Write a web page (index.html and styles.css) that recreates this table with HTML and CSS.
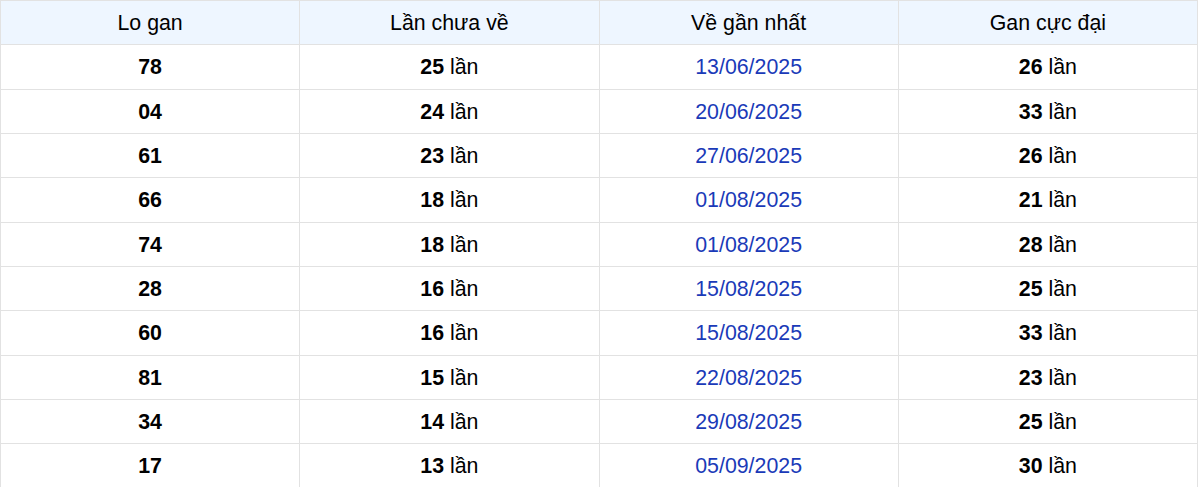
FILE: index.html
```html
<!DOCTYPE html>
<html lang="vi">
<head>
<meta charset="utf-8">
<title>Lo gan</title>
<link rel="stylesheet" href="styles.css">
</head>
<body>
<table class="gan-table">
  <thead>
    <tr><th>Lo gan</th><th>Lần chưa về</th><th>Về gần nhất</th><th>Gan cực đại</th></tr>
  </thead>
  <tbody>
    <tr><td><b>78</b></td><td><b>25</b> lần</td><td class="date">13/06/2025</td><td><b>26</b> lần</td></tr>
    <tr><td><b>04</b></td><td><b>24</b> lần</td><td class="date">20/06/2025</td><td><b>33</b> lần</td></tr>
    <tr><td><b>61</b></td><td><b>23</b> lần</td><td class="date">27/06/2025</td><td><b>26</b> lần</td></tr>
    <tr><td><b>66</b></td><td><b>18</b> lần</td><td class="date">01/08/2025</td><td><b>21</b> lần</td></tr>
    <tr><td><b>74</b></td><td><b>18</b> lần</td><td class="date">01/08/2025</td><td><b>28</b> lần</td></tr>
    <tr><td><b>28</b></td><td><b>16</b> lần</td><td class="date">15/08/2025</td><td><b>25</b> lần</td></tr>
    <tr><td><b>60</b></td><td><b>16</b> lần</td><td class="date">15/08/2025</td><td><b>33</b> lần</td></tr>
    <tr><td><b>81</b></td><td><b>15</b> lần</td><td class="date">22/08/2025</td><td><b>23</b> lần</td></tr>
    <tr><td><b>34</b></td><td><b>14</b> lần</td><td class="date">29/08/2025</td><td><b>25</b> lần</td></tr>
    <tr><td><b>17</b></td><td><b>13</b> lần</td><td class="date">05/09/2025</td><td><b>30</b> lần</td></tr>
  </tbody>
</table>
</body>
</html>
```
FILE: styles.css
```css
html, body {
  margin: 0;
  padding: 0;
  background: #ffffff;
}
body {
  font-family: "Liberation Sans", Arial, sans-serif;
  font-size: 21.33px;
  color: #000000;
}
.gan-table {
  width: 1198px;
  border-collapse: collapse;
  table-layout: fixed;
}
.gan-table th,
.gan-table td {
  border: 1px solid #e2e2e2;
  padding: 11px 8px 9px;
  line-height: 23.33px;
  text-align: center;
}
.gan-table th {
  font-weight: normal;
  background: #eef6ff;
}
.gan-table b {
  font-weight: bold;
}
.gan-table .date {
  color: #1a3ab8;
}
```
